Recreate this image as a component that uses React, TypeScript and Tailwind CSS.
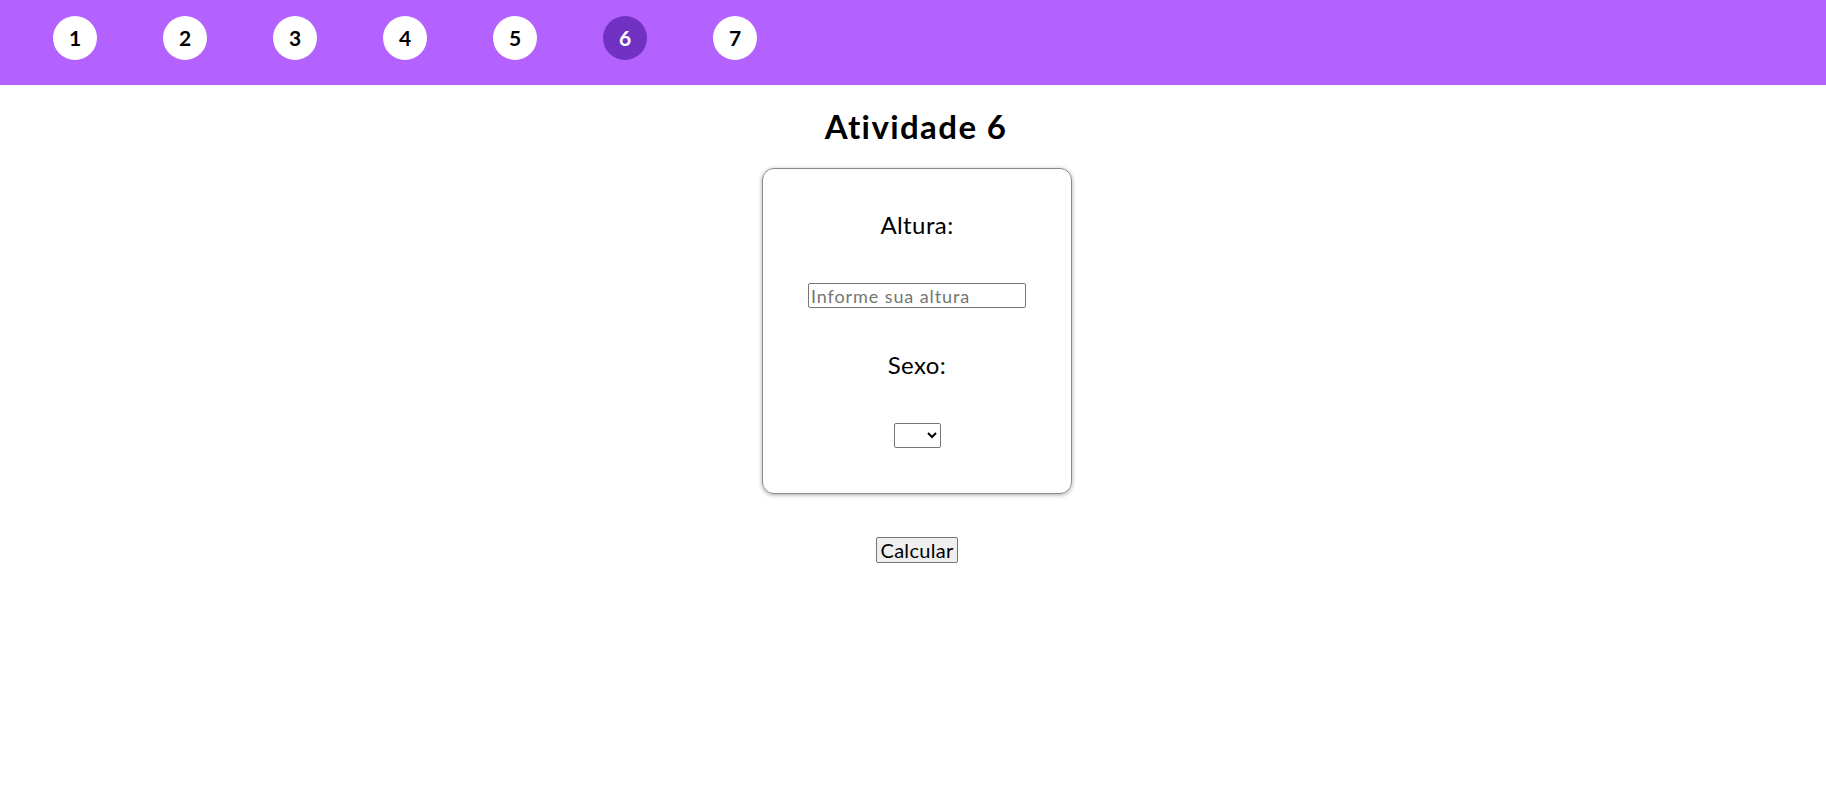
import React from "react";

export default function App() {
  const items = [1, 2, 3, 4, 5, 6, 7];
  return (
    <div className="min-h-[806px] bg-white text-black" style={{ fontFamily: "Lato, 'Noto Sans', sans-serif" }}>
      <nav className="h-[85px] bg-[#b362ff] flex items-start pt-[16px] pl-[53px] gap-[66px]">
        {items.map((n) => (
          <div
            key={n}
            className={
              n === 6
                ? "w-[44px] h-[44px] rounded-full bg-[#7131c3] text-white flex items-center justify-center text-[21px] font-bold"
                : "w-[44px] h-[44px] rounded-full bg-white text-black flex items-center justify-center text-[21px] font-bold"
            }
          >
            {n}
          </div>
        ))}
      </nav>
      <main className="flex flex-col items-center">
        <h1 className="mt-[21px] ml-[6px] text-[33px] leading-[40px] font-bold tracking-[1.4px]">Atividade 6</h1>
        <div className="mt-[22px] ml-[8px] w-[310px] h-[326px] border border-[#8a8a8a] rounded-[12px] shadow-[0_1px_4px_rgba(0,0,0,0.35)] flex flex-col items-center pt-[40px]">
          <label className="text-[24px] leading-[32px] tracking-[0.4px]">Altura:</label>
          <input
            type="text"
            placeholder="Informe sua altura"
            className="mt-[42px] w-[218px] h-[25px] border border-[#767676] rounded-[2px] px-[2px] text-[18px] leading-[23px] tracking-[0.9px] placeholder:text-[#757575] outline-none"
          />
          <label className="mt-[41px] text-[24px] leading-[32px] tracking-[0.4px]">Sexo:</label>
          <select className="mt-[42px] w-[47px] h-[25px] border border-[#767676] rounded-[2px] text-[16px] bg-white">
            <option value=""></option>
            <option value="m">Masculino</option>
            <option value="f">Feminino</option>
          </select>
        </div>
        <button className="mt-[43px] ml-[8px] h-[26px] px-[3px] border border-[#767676] rounded-[2px] bg-[#efefef] text-[20px] leading-[22px] tracking-[0.3px]">
          Calcular
        </button>
      </main>
    </div>
  );
}
